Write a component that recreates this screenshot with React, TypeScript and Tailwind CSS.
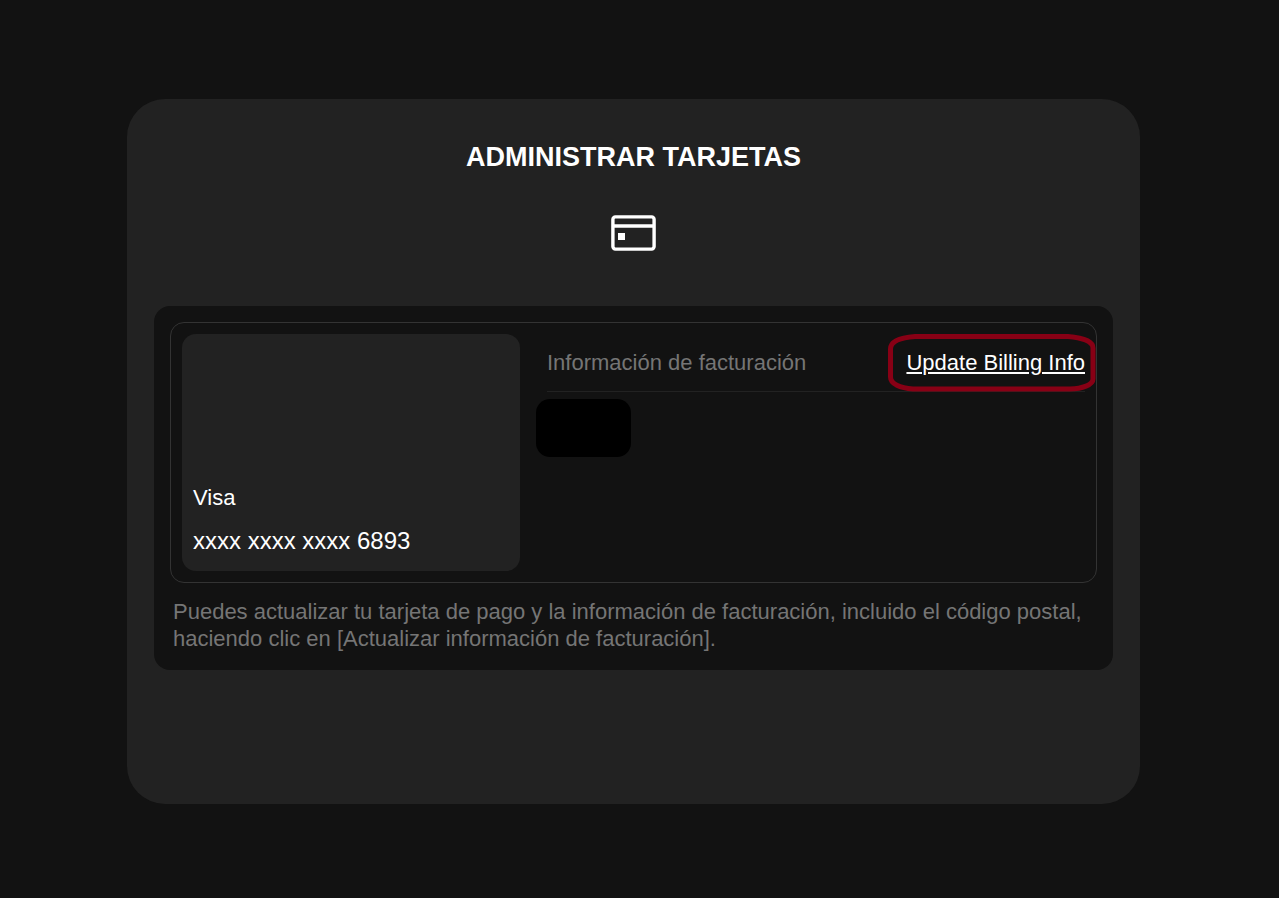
const CARD = {
  brand: "Visa",
  number: "xxxx xxxx xxxx 6893",
}

function CardIcon() {
  return (
    <svg className="h-9 w-[45px]" viewBox="0 0 45 36" fill="none" aria-hidden="true">
      <rect x="1.9" y="1.9" width="41.2" height="32.2" rx="2.5" stroke="white" strokeWidth="3.4" />
      <path d="M2 11H43" stroke="white" strokeWidth="3.4" />
      <rect x="7" y="18" width="7" height="7" fill="white" />
    </svg>
  )
}

/* Trazo rojo que rodea el enlace de facturación */
function Highlight() {
  return (
    <svg
      className="pointer-events-none absolute -top-[13px] -right-[11px] h-[58px] w-[208px]"
      viewBox="0 0 208 58"
      fill="none"
      aria-hidden="true"
    >
      <path
        d="M27 2.5H180C193 3.5 205 7 205 14V45C205 51 194 54.5 182 55H25C12 54 2.5 50 2.5 43V15C2.5 7 13 3.5 27 2.5Z"
        stroke="#880015"
        strokeWidth="5"
      />
    </svg>
  )
}

function PaymentCard() {
  return (
    <div className="flex h-[237px] w-[338px] shrink-0 flex-col justify-end gap-[11px] rounded-[14px] bg-[#222222] px-[11px] pb-[14px] text-white">
      <p className="text-[22px] leading-8">{CARD.brand}</p>
      <p className="text-2xl">{CARD.number}</p>
    </div>
  )
}

function BillingInfo() {
  return (
    <section className="ml-[27px] flex-1">
      <div className="flex items-center justify-between border-b border-[#222222] pt-[13px] pb-3">
        <h2 className="text-[22px] leading-8 text-[#757575]">Información de facturación</h2>
        <div className="relative">
          <a href="#billing" className="text-[22px] leading-8 text-white underline">
            Update Billing Info
          </a>
          <Highlight />
        </div>
      </div>
      <div className="mt-[7px] -ml-[11px] h-[58px] w-[95px] rounded-[14px] bg-black" />
    </section>
  )
}

export default function App() {
  return (
    <div className="min-h-screen bg-[#121212] pt-[99px] pr-[139px] pb-[94px] pl-[127px] font-['Liberation_Sans',Arial,sans-serif]">
      <main className="rounded-[38px] bg-[#222222] px-[27px] pt-10 pb-[134px]">
        <h1 className="text-center text-[27px] leading-9 font-bold text-white">ADMINISTRAR TARJETAS</h1>
        <div className="mt-10 mb-[55px] flex justify-center">
          <CardIcon />
        </div>
        <div className="rounded-2xl bg-[#121212] px-4 pt-4 pb-[18px]">
          <div className="flex rounded-[14px] border border-[#333333] p-[11px]">
            <PaymentCard />
            <BillingInfo />
          </div>
          <p className="mt-[15px] px-[3px] text-[22px] leading-[27px] text-[#757575]">
            Puedes actualizar tu tarjeta de pago y la información de facturación, incluido el código postal, haciendo
            clic en [Actualizar información de facturación].
          </p>
        </div>
      </main>
    </div>
  )
}
